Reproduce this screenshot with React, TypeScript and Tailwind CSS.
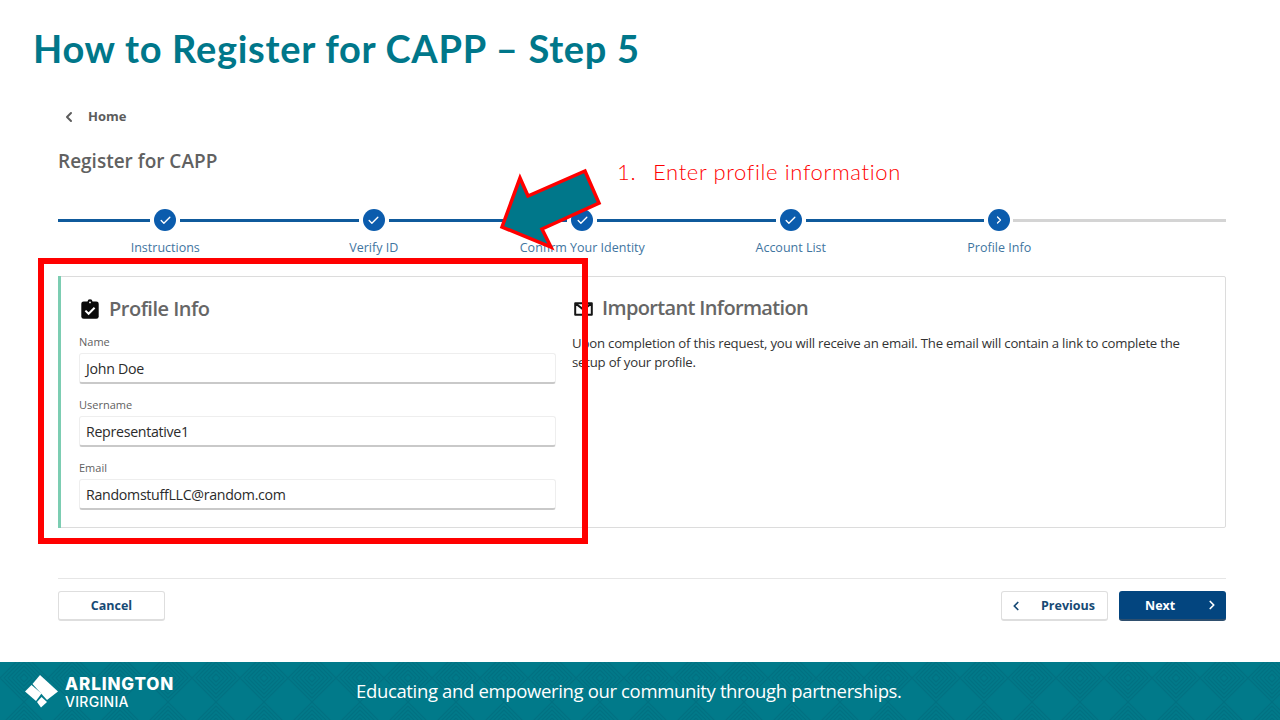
import React from "react";
import { ChevronLeft, ChevronRight, Check } from "lucide-react";

const steps = [
  { label: "Instructions", done: true },
  { label: "Verify ID", done: true },
  { label: "Confirm Your Identity", done: true },
  { label: "Account List", done: true },
  { label: "Profile Info", done: false },
];

const fields = [
  { label: "Name", value: "John Doe" },
  { label: "Username", value: "Representative1" },
  { label: "Email", value: "RandomstuffLLC@random.com" },
];

function Stepper() {
  return (
    <div className="mt-[21px]">
      <div className="flex items-center h-[22px]">
        <div className="w-[92px] h-[3px] bg-[#0f5a9c] shrink-0" />
        {steps.map((s, i) => (
          <React.Fragment key={s.label}>
            <div className="w-[22px] h-[22px] rounded-full bg-[#0b5cad] flex items-center justify-center shrink-0 ml-[4px]">
              {s.done ? (
                <Check size={13} strokeWidth={2.5} className="text-white" />
              ) : (
                <ChevronRight size={12} strokeWidth={2.5} className="text-white" />
              )}
            </div>
            {i < 4 ? (
              <div className="w-[178.5px] h-[3px] bg-[#0f5a9c] shrink-0 ml-[4px]" />
            ) : (
              <div className="flex-1 h-[3px] bg-[#d4d4d4] ml-[3px]" />
            )}
          </React.Fragment>
        ))}
      </div>
      <div className="flex ml-[3px] mt-[7px] h-[20px]">
        {steps.map((s) => (
          <div
            key={s.label}
            className="w-[208.5px] shrink-0 text-center text-[12.5px] leading-[20px] text-[#41759f]"
          >
            {s.label}
          </div>
        ))}
      </div>
    </div>
  );
}

function Field({ label, value }: { label: string; value: string }) {
  return (
    <div className="h-[63px]">
      <div className="text-[11px] leading-[14px] h-[18px] text-[#5f5f5f]">{label}</div>
      <div className="h-[31px] rounded-[3px] border border-[#eeeeee] border-b-2 border-b-[#c9c9c9] flex items-center pl-[6px] pt-[1px] text-[14.2px] tracking-[-0.3px] text-[#2b2b2b]">
        {value}
      </div>
    </div>
  );
}

export default function App() {
  return (
    <div className="relative w-[1280px] h-[720px] bg-white overflow-hidden flex flex-col font-['Open_Sans',sans-serif]">
      <div className="h-[98px] flex items-center pl-[33px] pb-[2px] text-[38px] font-bold text-[#00778a] font-['Lato',sans-serif] shrink-0 tracking-[0.7px]">
        How to Register for CAPP – Step 5
      </div>

      <div className="pl-[58px] pr-[54px] flex flex-col">
        <div className="h-[38px] flex items-center text-[#5c5c5c]">
          <ChevronLeft size={16} strokeWidth={3} className="ml-[3px]" />
          <span className="ml-[11px] text-[13px] font-bold">Home</span>
        </div>
        <div className="h-[52px] flex items-center pb-[1px] text-[19px] font-semibold text-[#616161]">
          Register for CAPP
        </div>

        <Stepper />

        <div className="mt-[18px] h-[252px] flex border border-[#dcdcdc] rounded-[2px] shrink-0">
          <div className="w-[499px] shrink-0 border-l-[3px] border-l-[#7ccdb2] pl-[18px] pr-[1px] -ml-px -my-px flex flex-col">
            <div className="h-[59px] flex items-center pt-[6px]">
              <svg width="18" height="20" viewBox="0 0 18 20" className="ml-[2px] shrink-0">
                <rect x="0.3" y="2.4" width="17.4" height="17.4" rx="2.4" fill="#0a0a0a" />
                <circle cx="9" cy="2.6" r="2.4" fill="#0a0a0a" />
                <circle cx="9" cy="3.4" r="0.9" fill="#fff" />
                <path d="M4.4 11.6l3.2 3.2 6-6" fill="none" stroke="#fff" strokeWidth="2" />
              </svg>
              <span className="ml-[10px] text-[20px] font-semibold tracking-[-0.5px] text-[#666666]">Profile Info</span>
            </div>
            {fields.map((f) => (
              <Field key={f.label} {...f} />
            ))}
          </div>
          <div className="flex-1 pl-[15px] pr-[40px]">
            <div className="h-[62px] flex items-center">
              <svg width="19" height="14" viewBox="0 0 19 14" className="ml-[2px] mt-[1px] shrink-0">
                <path
                  d="M1.2 1.2h16.6v11.6H1.2zM1.2 1.2l8.3 6.4 8.3-6.4"
                  fill="none"
                  stroke="#151515"
                  strokeWidth="2"
                  strokeLinejoin="round"
                />
              </svg>
              <span className="ml-[9px] text-[20px] font-semibold tracking-[-0.65px] text-[#666666]">
                Important Information
              </span>
            </div>
            <p className="text-[13.2px] tracking-[-0.22px] leading-[19px] text-[#333333] -mt-[5px]">
              Upon completion of this request, you will receive an email. The email will contain a link to complete
              the setup of your profile.
            </p>
          </div>
        </div>

        <div className="mt-[50px] h-px bg-[#e6e6e6]" />

        <div className="mt-[12px] h-[30px] flex items-center">
          <button className="w-[107px] h-[30px] pt-[2px] rounded-[3px] border border-[#dedede] border-b-2 text-[12.5px] font-bold text-[#174a75]">
            Cancel
          </button>
          <button className="ml-auto w-[107px] h-[30px] pt-[2px] rounded-[3px] border border-[#dedede] border-b-2 text-[12.5px] font-bold text-[#174a75] flex items-center pl-[7px]">
            <ChevronLeft size={14} strokeWidth={3} className="-mt-[2px]" />
            <span className="ml-[18px]">Previous</span>
          </button>
          <button className="ml-[11px] w-[107px] h-[30px] pt-[2px] rounded-[3px] bg-[#03457f] border-b-2 border-b-[#2f4f6e] text-[12.5px] font-bold text-white flex items-center pl-[26px] pr-[7px] justify-between">
            <span>Next</span>
            <ChevronRight size={14} strokeWidth={3} className="-mt-[2px]" />
          </button>
        </div>
      </div>

      <div className="relative mt-auto h-[58px] bg-[#017a8a] shrink-0 flex items-center overflow-hidden">
        <svg className="absolute inset-0" width="1280" height="58">
          <defs>
            <pattern id="chev" width="48" height="48" patternUnits="userSpaceOnUse" y="-8">
              <path
                d="M24 0L48 24L24 48L0 24ZM24 4L44 24L24 44L4 24ZM24 8L40 24L24 40L8 24ZM24 12L36 24L24 36L12 24ZM24 16L32 24L24 32L16 24ZM24 20L28 24L24 28L20 24Z"
                fill="none"
                stroke="#017182"
                strokeWidth="1.3"
              />
            </pattern>
          </defs>
          <rect width="1280" height="58" fill="url(#chev)" />
        </svg>
        <svg className="relative ml-[24px] shrink-0" width="36" height="36" viewBox="24 674 36 36">
          <path fill="#fff" d="M40 676L58 692.5L47 701L32.5 685Z" />
          <path fill="#fff" d="M25 692.5L31.5 686L41.5 694.5L36 702Z" />
          <path fill="#fff" d="M37 703L41.5 698L47 703L41 708.5Z" />
        </svg>
        <div className="relative ml-[5px] w-[120px] text-white font-['Inter',sans-serif] shrink-0 pt-[3px]">
          <div className="text-[17px] font-extrabold leading-[18px] tracking-[0.9px] whitespace-nowrap">ARLINGTON</div>
          <div className="text-[14px] font-medium leading-[17px] tracking-[0.3px]">VIRGINIA</div>
        </div>
        <div className="relative ml-[171px] text-[18.5px] tracking-[-0.35px] text-white font-['Open_Sans',sans-serif] whitespace-nowrap">
          Educating and empowering our community through partnerships.
        </div>
      </div>

      <div className="absolute left-[38px] top-[258px] w-[550px] h-[286px] border-[6px] border-[#ff0000]" />

      <svg className="absolute left-[495px] top-[165px]" width="112" height="90" viewBox="495 165 112 90">
        <path
          d="M502 227L520 178L528 196L585 171L599 203L542 229L551 247Z"
          fill="#00778a"
          stroke="#ff0000"
          strokeWidth="3.5"
          strokeLinejoin="miter"
        />
      </svg>

      <div className="absolute left-[617px] top-[158px] text-[22px] leading-[28px] tracking-[0.65px] font-light text-[#ff0000] font-['Lato',sans-serif] whitespace-nowrap flex">
        <span className="w-[36px]">1.</span>
        <span>Enter profile information</span>
      </div>
    </div>
  );
}
